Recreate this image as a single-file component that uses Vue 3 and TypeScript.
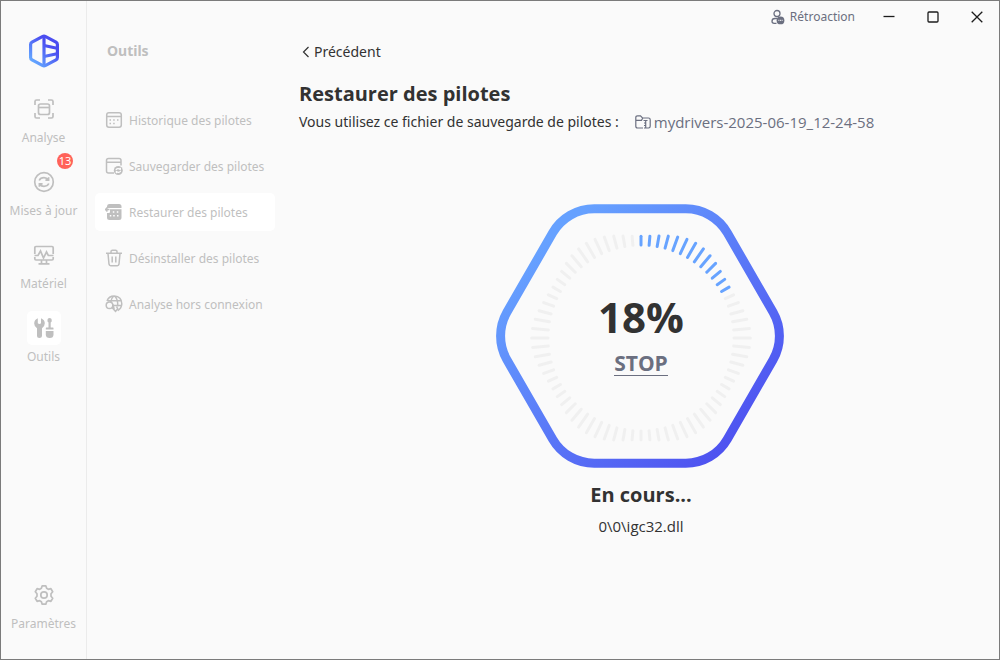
<script setup lang="ts">
interface RailItem {
  id: string
  label: string
  badge?: number
  active?: boolean
}

interface ToolItem {
  id: string
  label: string
  active?: boolean
}

interface Tick {
  x1: number
  y1: number
  x2: number
  y2: number
  done: boolean
}

const railItems: RailItem[] = [
  { id: 'scan', label: 'Analyse' },
  { id: 'update', label: 'Mises à jour', badge: 13 },
  { id: 'hardware', label: 'Matériel' },
  { id: 'tools', label: 'Outils', active: true },
]

const toolItems: ToolItem[] = [
  { id: 'history', label: 'Historique des pilotes' },
  { id: 'backup', label: 'Sauvegarder des pilotes' },
  { id: 'restore', label: 'Restaurer des pilotes', active: true },
  { id: 'uninstall', label: 'Désinstaller des pilotes' },
  { id: 'offline', label: 'Analyse hors connexion' },
]

const progress = 18
const tickCount = 72
const doneCount = Math.round((progress / 100) * tickCount)

// The outer end of each tick follows the six-sided outline around the dial.
const ticks: Tick[] = Array.from({ length: tickCount }, (_, i) => {
  const angle = (i / tickCount) * Math.PI * 2
  const inner = 93
  const outer = 105.5 - 3.8 * Math.cos(angle * 6)
  return {
    x1: Math.sin(angle) * inner,
    y1: -Math.cos(angle) * inner,
    x2: Math.sin(angle) * outer,
    y2: -Math.cos(angle) * outer,
    done: i < doneCount,
  }
})
</script>

<template>
  <div class="window">
    <nav class="rail" aria-label="Navigation principale">
      <svg class="logo" viewBox="0 0 32 34" aria-hidden="true">
        <defs>
          <linearGradient id="logo-fill" gradientUnits="userSpaceOnUse" x1="3" y1="30" x2="27" y2="5">
            <stop offset="0.1" stop-color="#63a5ff" />
            <stop offset="0.75" stop-color="#4b4df0" />
          </linearGradient>
        </defs>
        <g fill="none" stroke="url(#logo-fill)" stroke-width="3.2" stroke-linejoin="round">
          <path d="M14.3 2.6 4 8.2Q2.600 9 2.600 10.600V23.400Q2.600 25 4 25.800L14.300 31.400Q16 32.200 17.700 31.400L28 25.800Q29.400 25 29.400 23.400V10.600Q29.400 9 28 8.200L17.700 2.600Q16 1.800 14.300 2.600Z" />
          <path d="M16 2.500V31.500" />
          <path d="M16 11.500 29 14.300M16 22.500 29 19.700" />
        </g>
      </svg>

      <ul class="rail-list">
        <li v-for="item in railItems" :key="item.id">
          <button class="rail-item" :class="{ active: item.active }" type="button">
            <span class="tile">
              <svg v-if="item.id === 'scan'" class="rail-icon" viewBox="0 0 22 22" aria-hidden="true">
                <path d="M2 7V3.500Q2 2 3.500 2H7M15 2h3.500Q20 2 20 3.500V7M20 15v3.500Q20 20 18.500 20H15M7 20H3.500Q2 20 2 18.500V15" />
                <rect x="5.500" y="6" width="11" height="10.500" rx="2" />
                <path d="M6 9.500h10.500" />
              </svg>
              <svg v-else-if="item.id === 'update'" class="rail-icon" viewBox="0 0 22 22" aria-hidden="true">
                <circle cx="11" cy="11" r="9.300" />
                <path d="M6.200 9.500Q7.500 6.700 11 6.700q2.600 0 4.400 2.200M15.600 6.200v3h-3.200M15.800 12.500Q14.500 15.300 11 15.300q-2.600 0-4.400-2.200M6.400 15.800v-3h3.200" />
              </svg>
              <svg v-else-if="item.id === 'hardware'" class="rail-icon" viewBox="0 0 22 22" aria-hidden="true">
                <path d="M1.800 10V3.800Q1.800 2.500 3 2.500H19Q20.200 2.500 20.200 3.800V10M1.800 13v1.800Q1.800 16 3 16H19Q20.200 16 20.200 14.800V13M8.500 16v3.500M13.500 16v3.500M5.500 19.800h11" />
                <path d="M1.500 11.500H5L7.500 7l3 7 3-6 1.800 3.500h5.200" />
              </svg>
              <svg v-else class="rail-icon solid" viewBox="0 0 22 22" aria-hidden="true">
                <path d="M4.800 1.200Q1.200 2.700 1.200 6.500 1.200 9.600 4 11.200V19Q4 21 6.300 21 9 21 9 19V11.200Q11.800 9.500 11.800 6.300 11.800 2.700 8 1.200V6.300Q6.500 7.800 4.800 6.300Z" />
                <path d="M14.500 2.800Q14.500 1 16.500 1 18.700 1 18.700 2.800V4.500L17.700 5.600V10.500H20Q20.500 10.500 20.500 11.200V12.500H12.800V11.200Q12.800 10.500 13.400 10.500H15.500V5.600L14.500 4.500Z" />
                <path d="M12.800 14H20.500V17.500Q20.500 21 16.700 21 12.800 21 12.800 17.500Z" />
              </svg>
            </span>
            <span class="rail-label">{{ item.label }}</span>
            <span v-if="item.badge" class="badge">{{ item.badge }}</span>
          </button>
        </li>
      </ul>

      <button class="rail-item settings" type="button">
        <span class="tile">
          <svg class="rail-icon" viewBox="0 0 22 22" aria-hidden="true">
            <circle cx="11" cy="11" r="3.200" />
            <path stroke-linejoin="round" d="M9.200 1.800h3.600l.8 2.500 1.700 1 2.600-.6 1.800 3.100-1.700 2v2.400l1.700 2-1.800 3.100-2.600-.6-1.700 1-.8 2.500H9.200l-.8-2.500-1.700-1-2.600.6-1.800-3.100 1.700-2V9.800l-1.700-2 1.800-3.100 2.600.6 1.700-1Z" />
          </svg>
        </span>
        <span class="rail-label">Paramètres</span>
      </button>
    </nav>

    <aside class="tools">
      <h2 class="tools-title">Outils</h2>
      <ul class="tools-list">
        <li v-for="tool in toolItems" :key="tool.id">
          <button class="tool" :class="{ active: tool.active }" type="button">
            <svg v-if="tool.id === 'history'" class="tool-icon" viewBox="0 0 18 18" aria-hidden="true">
              <rect x="1.700" y="1.700" width="14.600" height="14.600" rx="2.200" />
              <path d="M2 5.500h14" />
              <path d="M4.500 9h1.500M8.200 9h1.500M12 9h1.500M4.500 12.500h1.500M8.200 12.500h1.500" stroke-width="1.600" />
            </svg>
            <svg v-else-if="tool.id === 'backup'" class="tool-icon" viewBox="0 0 18 18" aria-hidden="true">
              <path d="M9 16H3.500Q1.500 16 1.500 14V3.500Q1.500 1.500 3.500 1.500H14Q16 1.500 16 3.500V8.500M1.700 5.300H16" />
              <circle class="fill" cx="13.300" cy="13.500" r="4.500" />
              <path class="knock" stroke-width="1.100" d="M10.800 12.800q2-2.200 4.500-.3v-1.700M15.800 14.200q-2 2.200-4.500.3v1.700" />
            </svg>
            <svg v-else-if="tool.id === 'restore'" class="tool-icon" viewBox="0 0 18 18" aria-hidden="true">
              <path class="fill" d="M4 1H14Q16.500 1 16.500 3.500V5H2V3.500Q2 1 4 1ZM5 6.300H16.500V14.500Q16.500 17 14 17H4.500Q2 17 2 14.500V10H4Q5 10 5 8.500Z" />
              <path d="M4.500 6.500H.8M2.400 4.500.6 6.500l1.800 2" />
              <path class="knock" d="M7.800 9h1.500M11.800 9h1.500M4.800 12.800h1.500M8.200 12.800h1.500M12 12.800h1.500" stroke-width="1.500" />
            </svg>
            <svg v-else-if="tool.id === 'uninstall'" class="tool-icon" viewBox="0 0 18 18" aria-hidden="true">
              <path d="M1 4.200h16M6 4V2.600Q6 1.200 7.500 1.200h3Q12 1.200 12 2.600V4M3 4.500l1 10.700Q4.200 16.700 5.700 16.700h6.600Q13.800 16.700 14 15.200L15 4.500M7.200 7.500v6M10.800 7.500v6" />
            </svg>
            <svg v-else class="tool-icon" viewBox="0 0 18 18" aria-hidden="true">
              <path d="M2 6Q3.800 1 9.200 1 16.800 1.400 16.800 9q-.3 4.300-4 6.600M3 5.800h13M8 10.500h8.700M8.700 1Q6 3.500 5.800 7M9.700 1q3.600 4 3 10.500" />
              <circle cx="4.500" cy="10.300" r="3.300" />
              <path d="M7 12.500l3.500 3.800 2.300-2.500-1.300-2.300M8 9.500l1.200 5" />
            </svg>
            <span class="tool-label">{{ tool.label }}</span>
          </button>
        </li>
      </ul>
    </aside>

    <div class="content">
      <header class="titlebar">
        <button class="feedback" type="button">
          <svg class="feedback-icon" viewBox="0 0 14 16" aria-hidden="true">
            <circle cx="6" cy="4.500" r="3" />
            <path d="M5.500 14.300H3.200Q1 14.300 1 12.200 1 9.500 4 9.500h2" />
            <circle class="fill" cx="9.500" cy="11.400" r="3.900" />
            <path class="knock" d="M7.500 11.400h.8M9.100 11.400h.8M10.700 11.400h.8" />
          </svg>
          <span>Rétroaction</span>
        </button>
        <button class="control" type="button" aria-label="Réduire">
          <svg viewBox="0 0 12 12" aria-hidden="true"><path d="M0.500 5.500h11" /></svg>
        </button>
        <button class="control" type="button" aria-label="Agrandir">
          <svg viewBox="0 0 12 12" aria-hidden="true"><rect x="1" y="1" width="10" height="10" rx="1" /></svg>
        </button>
        <button class="control" type="button" aria-label="Fermer">
          <svg viewBox="0 0 12 12" aria-hidden="true"><path d="M0.700 0.700l10.600 10.600M11.300 0.700L0.700 11.300" /></svg>
        </button>
      </header>

      <main class="page">
        <button class="back" type="button">
          <svg viewBox="0 0 8 12" aria-hidden="true"><path d="M6.500 1 1.500 6l5 5" /></svg>
          <span>Précédent</span>
        </button>
        <h1 class="title">Restaurer des pilotes</h1>
        <p class="source">
          <span>Vous utilisez ce fichier de sauvegarde de pilotes :</span>
          <a class="file" href="#">
            <svg viewBox="0 0 16 14" aria-hidden="true">
              <path d="M8 13H2.500Q.8 13 .8 11.300V2.500Q.8.800 2.500.800H5.500L7.500 3H13.500Q15.200 3 15.200 4.700V11.300Q15.200 13 13.500 13H12M1 5.300H6.500L7.800 3" />
              <path d="M8.500 5.500h4M10.700 5.500V13M9 8h1.500M9 10.500h1.500M12 13H9" />
            </svg>
            <span>mydrivers-2025-06-19_12-24-58</span>
          </a>
        </p>

        <section class="progress" aria-label="Progression">
          <div class="dial">
            <svg class="dial-art" viewBox="-144 -132 290 264" aria-hidden="true">
              <defs>
                <linearGradient id="ring" x1="0.150" y1="0.150" x2="0.880" y2="0.880">
                  <stop offset="0" stop-color="#66a1ff" />
                  <stop offset="1" stop-color="#4e52f0" />
                </linearGradient>
              </defs>
              <path
                fill="none"
                stroke="url(#ring)"
                stroke-width="9"
                d="M-45.800 -127.200H45.800A48 48 0 0 1 87.300 -103.200L133.100 -23.800A48 48 0 0 1 133.100 23.800L87.300 103.200A48 48 0 0 1 45.800 127.200H-45.800A48 48 0 0 1 -87.300 103.200L-133.100 23.800A48 48 0 0 1 -133.100 -23.800L-87.300 -103.200A48 48 0 0 1 -45.800 -127.200Z"
              />
              <g transform="translate(1 2)">
                <line
                  v-for="(tick, i) in ticks"
                  :key="i"
                  class="tick"
                  :class="{ done: tick.done }"
                  :x1="tick.x1"
                  :y1="tick.y1"
                  :x2="tick.x2"
                  :y2="tick.y2"
                />
              </g>
            </svg>
            <div class="dial-text">
              <strong class="percent">{{ progress }}%</strong>
              <button class="stop" type="button">STOP</button>
            </div>
          </div>
          <h2 class="status">En cours...</h2>
          <p class="current">0\0\igc32.dll</p>
        </section>
      </main>
    </div>
  </div>
</template>

<style>
html,
body,
#app {
  height: 100%;
}

body {
  margin: 0;
}
</style>

<style scoped>
.window {
  display: flex;
  box-sizing: border-box;
  min-height: 100%;
  border: 1px solid #7b7b7b;
  background: #fafafa;
  color: #323232;
  font-family: 'Noto Sans', sans-serif;
  font-size: 14px;
  line-height: 20px;
}

button {
  margin: 0;
  padding: 0;
  border: 0;
  background: none;
  color: inherit;
  font: inherit;
  cursor: pointer;
}

h1,
h2,
p,
ul {
  margin: 0;
  padding: 0;
}

ul {
  list-style: none;
}

svg {
  display: block;
  flex: none;
  fill: none;
  stroke: currentColor;
}

.rail {
  display: flex;
  flex-direction: column;
  align-items: center;
  flex: none;
  box-sizing: border-box;
  width: 86px;
  padding: 33px 0 26px;
  border-right: 1px solid #ebebeb;
  color: #bfbfbf;
  font-size: 12px;
}

.logo {
  width: 32px;
  height: 34px;
}

.rail-list {
  display: flex;
  flex-direction: column;
  gap: 18px;
  width: 100%;
  margin-top: 24px;
}

.rail-item {
  position: relative;
  display: flex;
  flex-direction: column;
  align-items: center;
  gap: 3px;
  width: 100%;
}

.tile {
  display: grid;
  place-items: center;
  width: 34px;
  height: 34px;
  border-radius: 5px;
}

.active .tile {
  background: #ffffff;
}

.rail-icon {
  width: 22px;
  height: 22px;
  stroke-width: 1.7;
}

.rail-icon.solid {
  fill: currentColor;
  stroke: none;
}

.rail-label {
  line-height: 18px;
  white-space: nowrap;
}

.badge {
  position: absolute;
  top: -12px;
  right: 13px;
  width: 16px;
  height: 16px;
  border-radius: 8px;
  background: #ff6259;
  color: #ffffff;
  font-size: 11px;
  line-height: 16px;
  text-align: center;
}

.settings {
  margin-top: auto;
}

.tools {
  flex: none;
  box-sizing: border-box;
  width: 196px;
  padding: 40px 8px 0;
  color: #bfbfbf;
  font-size: 12px;
}

.tools-title {
  padding-left: 12px;
  font-size: 14px;
  line-height: 20px;
}

.tools-list {
  display: flex;
  flex-direction: column;
  gap: 8px;
  margin-top: 40px;
}

.tool {
  display: flex;
  align-items: center;
  gap: 6px;
  width: 100%;
  height: 38px;
  padding-left: 10px;
  border-radius: 5px;
  white-space: nowrap;
}

.tool.active {
  background: #ffffff;
}

.tool-icon {
  width: 18px;
  height: 18px;
  stroke-width: 1.5;
}

.tool-label {
  padding-top: 2px;
}

.fill {
  fill: currentColor;
  stroke: none;
}

.knock {
  stroke: #ffffff;
}

.content {
  display: flex;
  flex-direction: column;
  flex: 1;
  min-width: 0;
}

.titlebar {
  display: flex;
  justify-content: flex-end;
  height: 32px;
}

.feedback {
  display: flex;
  align-items: center;
  gap: 5px;
  margin-right: 12px;
  color: #6b6f80;
  font-size: 12px;
}

.feedback-icon {
  width: 14px;
  height: 16px;
  stroke-width: 1.3;
}

.control {
  display: grid;
  place-items: center;
  width: 44px;
  color: #1c1c1c;
}

.control svg {
  width: 12px;
  height: 12px;
  stroke-width: 1.3;
}

.page {
  flex: 1;
  padding: 9px 16px 0;
}

.back {
  display: flex;
  align-items: center;
  gap: 4px;
  padding-left: 3px;
}

.back svg {
  width: 8px;
  height: 12px;
  stroke-width: 1.2;
}

.title {
  margin-top: 18px;
  font-family: 'Open Sans', 'Noto Sans', sans-serif;
  font-size: 20px;
  line-height: 28px;
}

.source {
  display: flex;
  flex-wrap: wrap;
  gap: 16px;
  margin-top: 4px;
}

.file {
  display: flex;
  align-items: center;
  gap: 3px;
  color: #6b6f80;
  font-family: 'Open Sans', 'Noto Sans', sans-serif;
  font-size: 15px;
  text-decoration: none;
}

.file svg {
  width: 16px;
  height: 14px;
  stroke-width: 1.2;
}

.progress {
  display: flex;
  flex-direction: column;
  align-items: center;
  margin-top: 72px;
}

.dial {
  display: grid;
  place-items: center;
}

.dial-art,
.dial-text {
  grid-area: 1 / 1;
}

.dial-art {
  width: 290px;
  height: 264px;
}

.tick {
  stroke: #f0f0f0;
  stroke-width: 3;
  stroke-linecap: round;
}

.tick.done {
  stroke: #67a3ff;
}

.dial-text {
  display: flex;
  flex-direction: column;
  align-items: center;
  gap: 4px;
  padding-bottom: 10px;
  font-family: 'Open Sans', 'Noto Sans', sans-serif;
}

.percent {
  font-size: 42px;
  line-height: 60px;
}

.stop {
  border-bottom: 1px solid #6b6f80;
  color: #6b6f80;
  font-size: 21px;
  font-weight: 700;
  line-height: 24px;
}

.status {
  margin-top: 13px;
  font-family: 'Open Sans', 'Noto Sans', sans-serif;
  font-size: 20px;
  line-height: 28px;
}

.current {
  margin-top: 7px;
  font-family: 'Open Sans', 'Noto Sans', sans-serif;
  font-size: 15px;
}
</style>
